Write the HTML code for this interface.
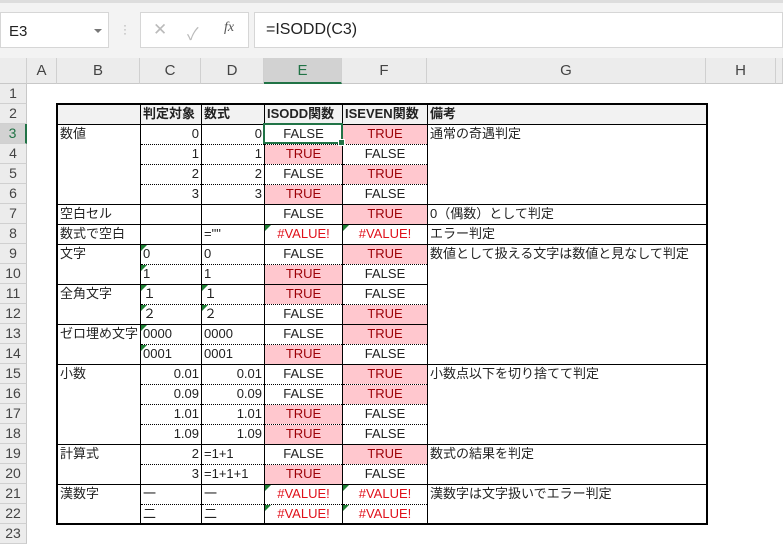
<!DOCTYPE html>
<html><head><meta charset="utf-8"><style>
*{margin:0;padding:0;box-sizing:border-box}
body{width:783px;height:541px;overflow:hidden;background:#fff;font-family:"Liberation Sans","Noto Sans CJK JP",sans-serif;font-size:13px;color:#222;position:relative}
.top{position:absolute;left:0;top:0;width:783px;height:58px;background:#f3f3f3;border-top:3px solid #ddd}
.nb{position:absolute;left:0;top:12px;width:109px;height:36px;background:#fff;border:1px solid #d6d6d6;font-size:15px;padding:10px 0 0 8px}
.nb:after{content:"";position:absolute;right:6px;top:16px;border:4px solid transparent;border-top:4px solid #777}
.dots{position:absolute;left:123px;top:23px;color:#aaa;font-size:12px;line-height:4px}
.fb1{position:absolute;left:140px;top:12px;width:109px;height:36px;background:#fff;border:1px solid #d6d6d6;color:#bbb;font-size:17px}
.fb2{position:absolute;left:254px;top:12px;width:529px;height:36px;background:#fff;border:1px solid #d6d6d6;font-size:16px;padding:8px 0 0 11px;color:#222}
.colh{position:absolute;top:58px;height:26px;background:#ececec;border-right:1px solid #d0d0d0;border-bottom:1px solid #c8c8c8;text-align:center;font-size:15px;line-height:25px;color:#444}
.rowh{position:absolute;left:0;width:27px;height:20px;background:#ececec;border-bottom:1px solid #d0d0d0;border-right:1px solid #c8c8c8;text-align:center;font-size:14px;line-height:19px;color:#444}
table{position:absolute;left:56px;top:103px;border-collapse:collapse;border:2px solid #000;table-layout:fixed}
td{height:20px;border-left:1px solid #000;border-right:1px solid #000;padding:0 2px;white-space:nowrap;vertical-align:middle;line-height:18px;position:relative;overflow:visible}
tr.d td{border-bottom:1px dotted #000}
tr.g td{border-top:1px solid #000}
tr.h td{background:#f2f2f2;font-weight:bold;border-bottom:1px solid #000}
.r{text-align:right}.c{text-align:center}
td.v{vertical-align:top}
.p{background:#ffc7ce;color:#9c0006}
.e{color:#e0101a}
.t:before{content:"";position:absolute;left:0;top:0;border-top:6px solid #1e7e34;border-right:6px solid transparent}
.sel{position:absolute;left:263px;top:123px;width:80px;height:21px;border:2px solid #217346}
.sel:after{content:"";position:absolute;right:-4px;bottom:-4px;width:5px;height:5px;background:#217346;border:1px solid #fff}
</style></head><body>
<div class="top"></div>
<div class="nb">E3</div>
<div class="dots">·<br>·<br>·</div>
<div class="fb1"><span style="position:absolute;left:12px;top:7px">✕</span><span style="position:absolute;left:46px;top:7px">✓</span><span style="position:absolute;left:83px;top:7px;color:#555;font-family:'Liberation Serif',serif;font-style:italic;font-size:14px">fx</span></div>
<div class="fb2">=ISODD(C3)</div>
<div class="colh" style="left:0;width:27px"></div>
<div class="colh" style="left:27px;width:30px">A</div>
<div class="colh" style="left:57px;width:83px">B</div>
<div class="colh" style="left:140px;width:61px">C</div>
<div class="colh" style="left:201px;width:63px">D</div>
<div class="colh" style="left:264px;width:78px;background:#d2d2d2;border-bottom:2px solid #217346;color:#217346">E</div>
<div class="colh" style="left:342px;width:85px">F</div>
<div class="colh" style="left:427px;width:279px">G</div>
<div class="colh" style="left:706px;width:70px">H</div>
<div class="colh" style="left:776px;width:7px"></div>
<div class="rowh" style="top:84px">1</div><div class="rowh" style="top:104px">2</div>
<div class="rowh" style="top:124px;background:#d2d2d2;border-right:2px solid #217346;color:#217346">3</div>
<div class="rowh" style="top:144px">4</div><div class="rowh" style="top:164px">5</div><div class="rowh" style="top:184px">6</div><div class="rowh" style="top:204px">7</div><div class="rowh" style="top:224px">8</div><div class="rowh" style="top:244px">9</div><div class="rowh" style="top:264px">10</div><div class="rowh" style="top:284px">11</div><div class="rowh" style="top:304px">12</div><div class="rowh" style="top:324px">13</div><div class="rowh" style="top:344px">14</div><div class="rowh" style="top:364px">15</div><div class="rowh" style="top:384px">16</div><div class="rowh" style="top:404px">17</div><div class="rowh" style="top:424px">18</div><div class="rowh" style="top:444px">19</div><div class="rowh" style="top:464px">20</div><div class="rowh" style="top:484px">21</div><div class="rowh" style="top:504px">22</div><div class="rowh" style="top:524px">23</div>
<table>
<colgroup><col style="width:82px"><col style="width:61px"><col style="width:63px"><col style="width:78px"><col style="width:85px"><col style="width:279px"></colgroup>
<tr class="h"><td></td><td>判定対象</td><td>数式</td><td>ISODD関数</td><td>ISEVEN関数</td><td>備考</td></tr>
<tr class="g d"><td class="v" rowspan="4">数値</td><td class="r">0</td><td class="r">0</td><td class="c">FALSE</td><td class="c p">TRUE</td><td class="v" rowspan="4">通常の奇遇判定</td></tr>
<tr class="d"><td class="r">1</td><td class="r">1</td><td class="c p">TRUE</td><td class="c">FALSE</td></tr>
<tr class="d"><td class="r">2</td><td class="r">2</td><td class="c">FALSE</td><td class="c p">TRUE</td></tr>
<tr><td class="r">3</td><td class="r">3</td><td class="c p">TRUE</td><td class="c">FALSE</td></tr>
<tr class="g"><td>空白セル</td><td></td><td></td><td class="c">FALSE</td><td class="c p">TRUE</td><td>0（偶数）として判定</td></tr>
<tr class="g"><td>数式で空白</td><td></td><td>=""</td><td class="c e t">#VALUE!</td><td class="c e t">#VALUE!</td><td>エラー判定</td></tr>
<tr class="g d"><td class="v" rowspan="2">文字</td><td class="t">0</td><td>0</td><td class="c">FALSE</td><td class="c p">TRUE</td><td class="v" rowspan="6">数値として扱える文字は数値と見なして判定</td></tr>
<tr><td class="t">1</td><td>1</td><td class="c p">TRUE</td><td class="c">FALSE</td></tr>
<tr class="g d"><td class="v" rowspan="2">全角文字</td><td class="t">１</td><td class="t">１</td><td class="c p">TRUE</td><td class="c">FALSE</td></tr>
<tr><td class="t">２</td><td class="t">２</td><td class="c">FALSE</td><td class="c p">TRUE</td></tr>
<tr class="g d"><td class="v" rowspan="2">ゼロ埋め文字</td><td class="t">0000</td><td>0000</td><td class="c">FALSE</td><td class="c p">TRUE</td></tr>
<tr><td class="t">0001</td><td>0001</td><td class="c p">TRUE</td><td class="c">FALSE</td></tr>
<tr class="g d"><td class="v" rowspan="4">小数</td><td class="r">0.01</td><td class="r">0.01</td><td class="c">FALSE</td><td class="c p">TRUE</td><td class="v" rowspan="4">小数点以下を切り捨てて判定</td></tr>
<tr class="d"><td class="r">0.09</td><td class="r">0.09</td><td class="c">FALSE</td><td class="c p">TRUE</td></tr>
<tr class="d"><td class="r">1.01</td><td class="r">1.01</td><td class="c p">TRUE</td><td class="c">FALSE</td></tr>
<tr><td class="r">1.09</td><td class="r">1.09</td><td class="c p">TRUE</td><td class="c">FALSE</td></tr>
<tr class="g d"><td class="v" rowspan="2">計算式</td><td class="r">2</td><td>=1+1</td><td class="c">FALSE</td><td class="c p">TRUE</td><td class="v" rowspan="2">数式の結果を判定</td></tr>
<tr><td class="r">3</td><td>=1+1+1</td><td class="c p">TRUE</td><td class="c">FALSE</td></tr>
<tr class="g d"><td class="v" rowspan="2">漢数字</td><td>一</td><td>一</td><td class="c e t">#VALUE!</td><td class="c e t">#VALUE!</td><td class="v" rowspan="2">漢数字は文字扱いでエラー判定</td></tr>
<tr><td>二</td><td>二</td><td class="c e t">#VALUE!</td><td class="c e t">#VALUE!</td></tr>
</table>
<div class="sel"></div>
</body></html>
